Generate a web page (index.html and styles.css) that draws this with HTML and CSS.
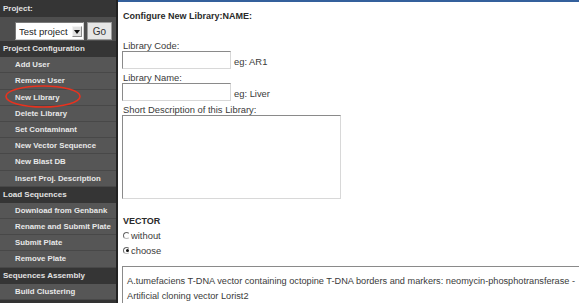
FILE: index.html
```html
<!DOCTYPE html>
<html lang="en">
<head>
    <meta charset="UTF-8">
    <title>Configure New Library</title>
    <link rel="stylesheet" href="styles.css">
</head>
<body>
    <div class="page">
        <div class="sidebar">
            <div class="menu-head first">Project:</div>
            <form class="project-pick">
                <span class="select-box">
                    <select name="project"><option>Test project</option></select>
                    <span class="arrow"></span>
                </span>
                <button type="button" class="go">Go</button>
            </form>
            <div class="menu-head">Project Configuration</div>
            <a class="menu-item">Add User</a>
            <a class="menu-item">Remove User</a>
            <a class="menu-item">New Library</a>
            <a class="menu-item">Delete Library</a>
            <a class="menu-item">Set Contaminant</a>
            <a class="menu-item">New Vector Sequence</a>
            <a class="menu-item">New Blast DB</a>
            <a class="menu-item">Insert Proj. Description</a>
            <div class="menu-head">Load Sequences</div>
            <a class="menu-item">Download from Genbank</a>
            <a class="menu-item">Rename and Submit Plate</a>
            <a class="menu-item">Submit Plate</a>
            <a class="menu-item">Remove Plate</a>
            <div class="menu-head">Sequences Assembly</div>
            <a class="menu-item">Build Clustering</a>

            <!-- red marker drawn round the current entry -->
            <svg class="marker" width="80" height="26" viewBox="0 0 80 26">
                <ellipse cx="39" cy="12.5" rx="37" ry="10.5" fill="none" stroke="#e8321e" stroke-width="1.6"/>
            </svg>
        </div>

        <div class="content">
            <h2>Configure New Library:NAME:</h2>
            <form id="libraryForm">
                <label for="code" class="first-label">Library Code:</label>
                <div class="field">
                    <input type="text" id="code" name="code">
                    <span class="hint">eg: AR1</span>
                </div>

                <label for="libname">Library Name:</label>
                <div class="field">
                    <input type="text" id="libname" name="libname">
                    <span class="hint">eg: Liver</span>
                </div>

                <label for="desc">Short Description of this Library:</label>
                <textarea id="desc" name="desc"></textarea>

                <div class="section-title">VECTOR</div>
                <div class="radio-row first-radio">
                    <input type="radio" id="vecWithout" name="vector" value="without">
                    <label for="vecWithout">without</label>
                </div>
                <div class="radio-row">
                    <input type="radio" id="vecChoose" name="vector" value="choose" checked>
                    <label for="vecChoose">choose</label>
                </div>

                <div class="vector-list">
                    <div class="vector-option">A.tumefaciens T-DNA vector containing octopine T-DNA borders and markers: neomycin-phosphotransferase - </div>
                    <div class="vector-option">Artificial cloning vector Lorist2</div>
                </div>
            </form>
        </div>
    </div>
</body>
</html>
```

FILE: styles.css
```css
html, body {
    margin: 0;
    padding: 0;
    height: 100%;
    overflow: hidden;
}
body {
    font-family: "Liberation Sans", Arial, sans-serif;
    background-color: #ffffff;
    color: #3a3a3a;
}
.page {
    display: flex;
    height: 100%;
}
.sidebar {
    position: relative;
    width: 116px;
    flex-shrink: 0;
    background-color: #333333;
    border-right: 2px solid #222222;
}
.menu-head {
    height: 16.2px;
    line-height: 16.2px;
    padding-left: 3px;
    font-size: 8px;
    font-weight: bold;
    color: #e2e2e2;
    background-color: #353535;
}
.menu-head.first {
    height: 17px;
    line-height: 18px;
}
.project-pick {
    display: flex;
    height: 24px;
    margin: 0;
    padding: 5px 0 0 15px;
    box-sizing: border-box;
    background-color: #4e4e4e;
}
.select-box {
    display: inline-flex;
    align-items: center;
    width: 69px;
    height: 18px;
    box-sizing: border-box;
    border: 1px solid;
    border-color: #7a7a7a #cfcfcf #cfcfcf #7a7a7a;
    background-color: #ffffff;
}
.select-box select {
    appearance: none;
    -webkit-appearance: none;
    width: 56px;
    border: none;
    background: transparent;
    padding: 0 0 0 3px;
    margin: 0;
    font-family: "Liberation Sans", Arial, sans-serif;
    font-size: 9.5px;
    color: #222222;
}
.arrow {
    position: relative;
    width: 8px;
    height: 9px;
    border: 1px solid;
    border-color: #f4f4f4 #8a8a8a #8a8a8a #f4f4f4;
    background-color: #e2e2e2;
}
.arrow::after {
    content: "";
    position: absolute;
    left: 1px;
    top: 3px;
    border-left: 3px solid transparent;
    border-right: 3px solid transparent;
    border-top: 4px solid #111111;
}
.go {
    width: 25px;
    height: 18px;
    margin-left: 3px;
    padding: 0;
    border: 1px solid #9a9a9a;
    background-color: #e6e6e6;
    font-family: "Liberation Sans", Arial, sans-serif;
    font-size: 10px;
    color: #333333;
}
.menu-item {
    display: block;
    height: 16.2px;
    line-height: 15.2px;
    box-sizing: border-box;
    padding-left: 15px;
    border-bottom: 1px solid #484848;
    background-color: #565656;
    font-size: 7.8px;
    font-weight: bold;
    color: #e8e8e8;
    white-space: nowrap;
}
.marker {
    position: absolute;
    left: 4px;
    top: 84px;
}
.content {
    flex: 1;
    min-width: 0;
    border-top: 2px solid #34609c;
    padding: 9px 0 0 5px;
    font-size: 9.4px;
    overflow: hidden;
}
h2 {
    margin: 0;
    font-size: 9px;
    line-height: 11px;
    color: #2a2a2a;
}
#libraryForm {
    margin: 0;
}
#libraryForm > label {
    display: block;
    margin-top: 3px;
    line-height: 11px;
}
#libraryForm > label.first-label {
    margin-top: 17.5px;
}
.field {
    display: flex;
    align-items: flex-end;
}
.field input, textarea {
    box-sizing: border-box;
    margin: 0;
    border: 1px solid;
    border-color: #8a8a8a #d8d8d8 #d8d8d8 #8a8a8a;
    background-color: #ffffff;
}
.field input {
    width: 109px;
    height: 18px;
    margin-left: -1px;
}
.hint {
    margin-left: 3px;
    line-height: 11px;
    padding-bottom: 2px;
}
textarea {
    display: block;
    width: 219px;
    height: 84.5px;
    margin-left: -1px;
    resize: none;
}
.section-title {
    margin-top: 16.5px;
    line-height: 11px;
    font-size: 9px;
    font-weight: bold;
    color: #2a2a2a;
}
.radio-row {
    display: flex;
    align-items: center;
    height: 14.5px;
}
.radio-row.first-radio {
    margin-top: 2px;
}
.radio-row input {
    appearance: none;
    -webkit-appearance: none;
    position: relative;
    width: 7px;
    height: 7px;
    margin: 0 1px 0 0;
    border: 1px solid;
    border-color: #666666 transparent #bbbbbb #666666;
    border-radius: 50%;
    background: transparent;
}
.radio-row input:checked::after {
    content: "";
    position: absolute;
    left: 1.5px;
    top: 1.5px;
    width: 3px;
    height: 3px;
    border-radius: 50%;
    background-color: #111111;
}
.vector-list {
    width: 600px;
    margin-top: 8px;
    margin-left: -1px;
    padding: 7px 0 0 4px;
    border: 1px solid;
    border-color: #8a8a8a #d8d8d8 #d8d8d8 #8a8a8a;
    height: 60px;
    font-size: 9.2px;
}
.vector-option {
    line-height: 15px;
    white-space: nowrap;
}
```
